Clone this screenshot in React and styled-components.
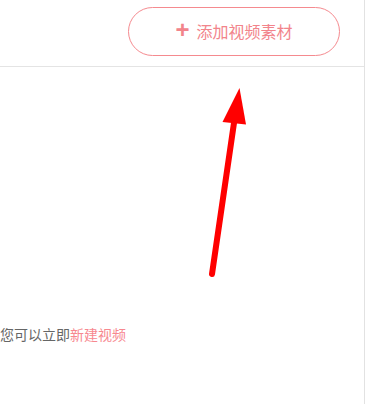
import React from "react";
import styled, { createGlobalStyle } from "styled-components";

const GlobalStyle = createGlobalStyle`
  html, body {
    margin: 0;
    padding: 0;
    background: #fff;
  }
  body {
    font-family: "Noto Sans CJK SC", "Liberation Sans", sans-serif;
  }
`;

const Page = styled.div`
  position: relative;
  width: 364px;
  height: 404px;
  border-right: 1px solid #e2e2e2;
  display: flex;
  flex-direction: column;
  overflow: hidden;
`;

const Toolbar = styled.div`
  height: 67px;
  box-sizing: border-box;
  border-bottom: 1px solid #e4e4e4;
  display: flex;
  justify-content: flex-end;
  align-items: flex-start;
  padding: 7px 24px 0 0;
`;

const AddButton = styled.button`
  width: 212px;
  height: 49px;
  box-sizing: border-box;
  border: 1px solid #f58a8f;
  border-radius: 25px;
  background: #fff;
  color: #f2848b;
  font-family: "Noto Sans CJK SC", sans-serif;
  font-size: 16px;
  display: flex;
  align-items: center;
  justify-content: center;
  gap: 7px;
  padding: 0 0 2px 0;
  cursor: pointer;
`;

const Plus = styled.span`
  font-family: "Liberation Sans", sans-serif;
  font-weight: bold;
  font-size: 24px;
  line-height: 1;
  margin-top: -2px;
`;

const Body = styled.div`
  flex: 1;
  padding-top: 257px;
`;

const Hint = styled.p`
  margin: 0;
  font-size: 14px;
  line-height: 20px;
  color: #666;
  white-space: nowrap;
`;

const Link = styled.a`
  color: #f7888f;
  text-decoration: none;
  cursor: pointer;
`;

const Arrow = styled.svg`
  position: absolute;
  left: 0;
  top: 0;
  pointer-events: none;
`;

export default function App() {
  return (
    <>
      <GlobalStyle />
      <Page>
        <Toolbar>
          <AddButton>
            <Plus>+</Plus>
            添加视频素材
          </AddButton>
        </Toolbar>
        <Body>
          <Hint>
            您可以立即<Link>新建视频</Link>
          </Hint>
        </Body>
        <Arrow width="365" height="404" viewBox="0 0 365 404">
          <line x1="212" y1="274" x2="235" y2="116" stroke="#ff0000" strokeWidth="6" strokeLinecap="round" />
          <polygon points="239.5,88 222.5,122 246,124.5" fill="#ff0000" />
        </Arrow>
      </Page>
    </>
  );
}
